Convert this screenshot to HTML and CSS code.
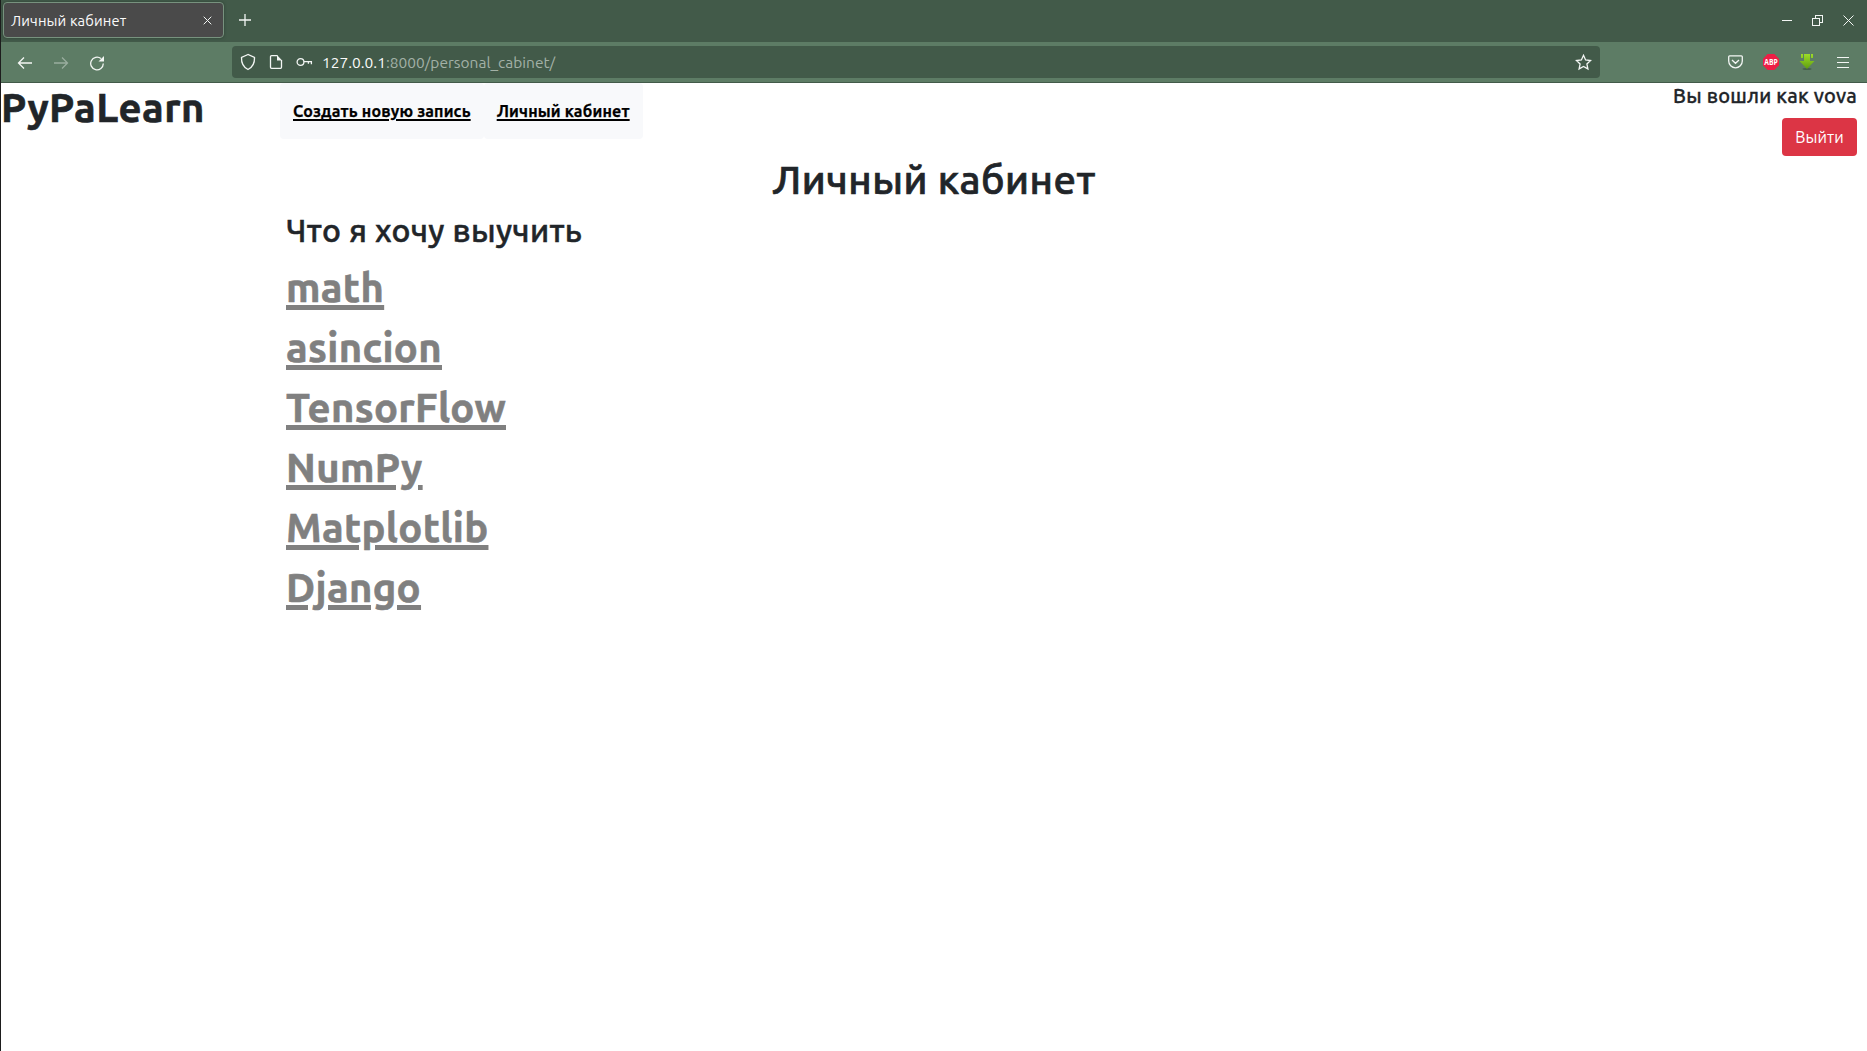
FILE: index.html
```html
<!DOCTYPE html>
<html lang="ru">
<head>
<meta charset="utf-8">
<title>Личный кабинет</title>
<link rel="stylesheet" href="styles.css">
</head>
<body>
<div class="window">
  <div class="tabbar">
    <div class="tab"><span>Личный кабинет</span>
      <svg width="9" height="9" viewBox="0 0 9 9"><path d="M.7.7l7.6 7.6M8.300.7L.7 8.300"/></svg>
    </div>
    <svg class="new-tab" width="12" height="12" viewBox="0 0 12 12"><path d="M6 0v12M0 6h12"/></svg>
    <div class="controls">
      <svg width="10" height="11" viewBox="0 0 10 11" shape-rendering="crispEdges"><path d="M0 5.500h10"/></svg>
      <svg width="11" height="11" viewBox="0 0 11 11" shape-rendering="crispEdges"><path d="M.5 3.500h7v7h-7zM3.500 3V.5h7v7H8"/></svg>
      <svg width="11" height="11" viewBox="0 0 11 11"><path d="M.5.5l10 10M10.500.5l-10 10"/></svg>
    </div>
  </div>
  <div class="navbar">
    <div class="nav-buttons">
      <svg width="16" height="16" viewBox="0 0 16 16"><path d="M15 8H1.500M7 2.500L1.500 8 7 13.500"/></svg>
      <svg class="dim" width="16" height="16" viewBox="0 0 16 16"><path d="M1 8h13.500M9 2.500L14.500 8 9 13.500"/></svg>
      <svg width="16" height="16" viewBox="0 0 16 16"><path d="M14.300 8.500A6.300 6.300 0 1 1 12 3.600"/><path class="solid" d="M15 1v5.500H9.500z"/></svg>
    </div>
    <div class="urlbar">
      <svg width="16" height="18" viewBox="0 0 16 18"><path d="M8 1.500L1.500 4.500C1.300 9.500 3 14 8 16.500c5-2.500 6.700-7 6.500-12z"/></svg>
      <svg width="14" height="16" viewBox="0 0 14 16"><path d="M8.500 1.700h-6a1 1 0 0 0-1 1v10.600a1 1 0 0 0 1 1h9a1 1 0 0 0 1-1V6"/><path class="solid" d="M8 1l5.200 5.400H8z"/></svg>
      <svg width="17" height="10" viewBox="0 0 17 10"><circle cx="4.500" cy="5" r="3.400"/><path d="M8 4.600h8M15.400 4.600v2.600M12.400 4.600v2.200"/></svg>
      <span class="url"><b>127.0.0.1</b>:8000/personal_cabinet/</span>
      <svg class="star" width="17" height="17" viewBox="0 0 17 17"><path d="M8.500 1.300l2.100 4.600 5 .6-3.700 3.400 1 5-4.400-2.500-4.400 2.500 1-5L1.400 6.500l5-.6z"/></svg>
    </div>
    <div class="extensions">
      <svg width="15" height="14" viewBox="0 0 15 14"><path d="M1.700.8h11.600q1 0 1 1V6a6.800 6.800 0 0 1-13.600 0V1.800q0-1 1-1zM4 5l3.500 3.300L11 5"/></svg>
      <svg class="adblock" width="16" height="16" viewBox="0 0 16 16"><path class="abp" d="M4.700 0h6.600L16 4.700v6.600L11.300 16H4.700L0 11.300V4.700z"/><text x="1.300" y="11" textLength="13.400" lengthAdjust="spacingAndGlyphs">ABP</text></svg>
      <svg width="16" height="16" viewBox="0 0 16 16"><defs><linearGradient id="lime" x2="0" y2="1"><stop stop-color="#9cdc28"/><stop offset="1" stop-color="#5f9d10"/></linearGradient></defs><ellipse class="shade" cx="8" cy="15" rx="4.500" ry="1"/><path class="lime" d="M5 0h6v7h4.500L8 15 .5 7H5zM2 0h2v4H2zM12 0h2v4h-2z"/></svg>
      <svg width="12" height="11" viewBox="0 0 12 11" shape-rendering="crispEdges"><path d="M0 .5h12M0 5.500h12M0 10.500h12"/></svg>
    </div>
  </div>
  <div class="page">
    <header>
      <div class="brand">PyPaLearn</div>
      <nav>
        <a href="#">Создать новую запись</a>
        <a href="#">Личный кабинет</a>
      </nav>
      <div class="account">
        <div class="who">Вы вошли как vova</div>
        <button type="button">Выйти</button>
      </div>
    </header>
    <h1>Личный кабинет</h1>
    <main>
      <h2>Что я хочу выучить</h2>
      <ul>
        <li><a href="#">math</a></li>
        <li><a href="#">asincion</a></li>
        <li><a href="#">TensorFlow</a></li>
        <li><a href="#">NumPy</a></li>
        <li><a href="#">Matplotlib</a></li>
        <li><a href="#">Django</a></li>
      </ul>
    </main>
  </div>
</div>
</body>
</html>
```
FILE: styles.css
```css
* { box-sizing: border-box; }
body { margin: 0; background: #fff; color: #212529; font-family: Ubuntu, "Noto Sans", sans-serif; overflow: hidden; }
.window { height: 1051px; border-left: 1px solid #1d1d1d; }
svg { display: block; flex: none; fill: none; stroke: #f3f6f4; stroke-width: 1.300; }
.solid { fill: #f3f6f4; stroke: none; }
.adblock { overflow: visible; }
.abp { fill: #ed1e45; stroke: none; }
svg text { fill: #fff; stroke: none; font: 700 8.500px "Open Sans", sans-serif; }
.shade { fill: #46604c; stroke: none; }
.lime { fill: url(#lime); stroke: none; }

.tabbar { display: flex; align-items: center; height: 42px; padding: 0 10px 2px 2px; background: #425a49; }
.tab { display: flex; align-items: center; justify-content: space-between; width: 221px; height: 36px; padding: 0 11px 0 7px; border: 1px solid #77927e; border-radius: 4px; background: #4a4a4a; color: #fbfbfb; font-size: 14.667px; line-height: 20px; letter-spacing: .13px; box-shadow: 0 0 3px #2f4034; }
.tab span { padding-top: 1px; }
.tab svg { stroke-width: 1; }
.new-tab { margin-left: 15px; }
.controls { display: flex; gap: 19px; margin-left: auto; padding-right: 3px; }
.controls svg { stroke-width: 1; }
.controls svg:nth-child(2) { margin-right: 1px; margin-left: 1px; }

.navbar { display: flex; align-items: center; height: 41px; border-bottom: 1px solid #425a49; background: #5d7c65; padding-right: 18px; }
.nav-buttons { display: flex; gap: 20px; width: 231px; padding: 1px 0 0 16px; }
.dim { opacity: .4; }
.urlbar { display: flex; align-items: center; width: 1368px; height: 32px; padding: 0 8px; border-radius: 4px; background: #425a49; color: #a3b1a7; font-size: 15.500px; line-height: 20px; }
.urlbar svg { margin-right: 13px; }
.urlbar svg:nth-child(3) { margin-right: 9px; }
.url { padding-top: 1px; }
.url b { color: #fafafa; font-weight: 400; }
.urlbar .star { margin: 0 0 0 auto; }
.extensions { display: flex; align-items: center; gap: 20px; margin-left: auto; }
.extensions svg:last-child { margin-left: 2px; }

header { display: flex; align-items: flex-start; height: 72px; }
.brand { width: 280px; margin-left: -1px; padding: 1px 0 0 1px; font-weight: 700; font-size: 40px; line-height: 48px; letter-spacing: .4px; -webkit-text-stroke: .6px; }
nav { display: flex; }
nav a { padding: 16px 13px; border-radius: 4px; background: #f8f9fb; color: #000; font-weight: 700; font-size: 16px; line-height: 24px; letter-spacing: .17px; -webkit-text-stroke: .25px; text-decoration-thickness: 2px; text-underline-offset: 2px; }
.account { display: flex; flex-direction: column; align-items: flex-end; gap: 10px; margin-left: auto; padding: 1px 10px 0 0; }
.who { font-weight: 500; font-size: 20px; line-height: 24px; letter-spacing: .21px; -webkit-text-stroke: .3px; }
button { width: 75px; height: 38px; padding: 0; border: 0; border-radius: 4px; background: #dc3545; color: #fff; font: 400 16px/24px Ubuntu, "Noto Sans", sans-serif; letter-spacing: .1px; }
h1 { margin: 0; padding: 1px 0 7px; text-align: center; font-weight: 500; font-size: 40px; line-height: 48px; letter-spacing: .45px; -webkit-text-stroke: .7px; }
main { padding-left: 285px; }
h2 { margin: 0 0 9px; font-weight: 500; font-size: 32px; line-height: 38px; letter-spacing: .33px; -webkit-text-stroke: .5px; }
ul { margin: 0; padding: 0; list-style: none; }
li { height: 60px; font-weight: 700; font-size: 40px; line-height: 60px; letter-spacing: .33px; }
li a { color: #808080; -webkit-text-stroke: .6px; text-decoration-thickness: 4.500px; text-underline-offset: 3px; }
```
